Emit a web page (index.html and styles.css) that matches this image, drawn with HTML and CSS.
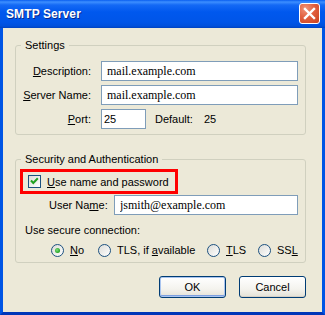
FILE: index.html
```html
<!DOCTYPE html>
<html lang="en">
<head>
<meta charset="UTF-8" />
<title>SMTP Server</title>
<link rel="stylesheet" href="styles.css">
</head>
<body>

<div class="window">
  <!-- title bar -->
  <div class="titlebar">
    <span class="title">SMTP Server</span>
    <button class="close" aria-label="Close">
      <svg width="13" height="13" viewBox="0 0 13 13"><path d="M2 2 L11 11 M11 2 L2 11" stroke="#fff" stroke-width="2.4" stroke-linecap="square"/></svg>
    </button>
  </div>

  <div class="frame">
    <!-- settings -->
    <fieldset class="group">
      <legend>Settings</legend>
      <div class="grid">
        <label class="lbl"><u>D</u>escription:</label>
        <input class="field serif" value="mail.example.com">
        <label class="lbl"><u>S</u>erver Name:</label>
        <input class="field serif" value="mail.example.com">
        <label class="lbl"><u>P</u>ort:</label>
        <div class="port-row">
          <input class="field port" value="25">
          <span class="def">Default:</span>
          <span>25</span>
        </div>
      </div>
    </fieldset>

    <!-- security -->
    <fieldset class="group sec">
      <legend>Security and Authentication</legend>
      <div class="highlight">
        <span class="check">
          <svg width="11" height="11" viewBox="0 0 11 11"><path d="M2 4.5 L4.3 7 L8.8 2.3" fill="none" stroke="#21a121" stroke-width="2"/></svg>
        </span>
        <span><u>U</u>se name and password</span>
      </div>
      <div class="user-row">
        <label class="ulbl">User Na<u>m</u>e:</label>
        <input class="field serif" value="jsmith@example.com">
      </div>
      <div class="conn">Use secure connection:</div>
      <div class="radios">
        <span class="opt"><span class="radio on"></span><span><u>N</u>o</span></span>
        <span class="opt"><span class="radio"></span><span>TLS, if <u>a</u>vailable</span></span>
        <span class="opt"><span class="radio"></span><span><u>T</u>LS</span></span>
        <span class="opt"><span class="radio"></span><span>SS<u>L</u></span></span>
      </div>
    </fieldset>

    <!-- buttons -->
    <div class="buttons">
      <button class="btn default">OK</button>
      <button class="btn">Cancel</button>
    </div>
  </div>
</div>

</body>
</html>
```

FILE: styles.css
```css
/* ───── RESET ───── */
*{box-sizing:border-box}
body{margin:0;width:325px;height:315px;overflow:hidden;font-family:"Liberation Sans",Arial,sans-serif;font-size:11px;color:#000}

/* ───── WINDOW ───── */
.window{display:flex;flex-direction:column;height:315px}
.titlebar{
  height:28px;flex:0 0 28px;display:flex;align-items:center;justify-content:space-between;
  padding:0 5px 0 6px;
  background:linear-gradient(#0a5ef0 0,#3d8fff 2px,#1469f5 5px,#0058ee 12px,#0055e8 22px,#0050dc 26px,#0042c0 28px)
}
.title{color:#fff;font-weight:700;font-size:12px;text-shadow:1px 1px 0 #0a2a8a;letter-spacing:.1px}
.close{
  width:21px;height:21px;padding:0;margin-top:-1px;display:flex;align-items:center;justify-content:center;
  border:1px solid #fff;border-radius:3px;
  background:radial-gradient(circle at 30% 25%,#f0947a 0,#e2603f 45%,#c8411f 100%)
}
.frame{
  flex:1;background:#ece9d8;
  border:3px solid #0055e5;border-top:0;
  border-bottom-color:#0036b8;
  padding:10px 16px 0 12px
}

/* ───── GROUP BOXES ───── */
.group{margin:0;border:1px solid #d0d0bf;border-radius:3px;padding:9px 7px 5px 0}
.group legend{margin-left:5px;padding:0 4px;line-height:14px}
.sec{margin-top:17px;padding-top:3px}

.grid{display:grid;grid-template-columns:75px 1fr;column-gap:10px;row-gap:4px;align-items:center}
.lbl{text-align:right}
.field{
  height:20px;border:1px solid #7f9db9;background:#fff;padding:0 0 0 5px;margin:0;
  font-family:"Liberation Sans",Arial,sans-serif;font-size:11px;color:#000;width:100%
}
.field.serif{font-family:"Liberation Serif","Times New Roman",serif;font-size:12px}
.port-row{display:flex;align-items:center}
.field.port{width:45px;padding-left:2px}
.def{margin:0 11px 0 9px}

/* checkbox row (highlighted) */
.highlight{
  display:inline-flex;align-items:center;gap:6px;
  margin-left:4px;height:25px;padding:0 6px 0 5px;border:3px solid #f00
}
.check{
  width:13px;height:13px;border:1px solid #1c5180;display:flex;align-items:center;justify-content:center;
  background:linear-gradient(135deg,#dcdcd7,#fff)
}

.user-row{display:flex;align-items:center;margin-top:1px;padding-left:33px}
.ulbl{flex:0 0 65px}

.conn{margin:9px 0 0 9px;line-height:13px}
.radios{
  display:grid;grid-template-columns:47px 109px 51px auto;align-items:center;
  margin-top:7px;padding-left:35px;line-height:13px;white-space:nowrap
}
.opt{display:flex;align-items:center;gap:6px}
.radio{
  flex:0 0 13px;width:13px;height:13px;border-radius:50%;border:1px solid #1c5180;display:flex;align-items:center;justify-content:center;
  background:linear-gradient(135deg,#dcdcd7,#fff)
}
.radio.on::after{content:"";width:5px;height:5px;border-radius:50%;background:radial-gradient(circle at 40% 40%,#7ee07e,#21a121 70%)}

/* ───── BUTTONS ───── */
.buttons{display:flex;justify-content:flex-end;gap:13px;margin-top:13px}
.btn{
  width:67px;height:22px;padding:0;border:1px solid #003c74;border-radius:3px;
  font-family:"Liberation Sans",Arial,sans-serif;font-size:11px;color:#000;
  background:linear-gradient(#fff,#f4f3ee 60%,#e3e1d6);
  box-shadow:inset 0 -1px 0 #d6d0c5
}
.btn.default{box-shadow:inset 0 0 0 1px #a9c4ef,inset 0 -2px 0 #7c9fe0}
```
